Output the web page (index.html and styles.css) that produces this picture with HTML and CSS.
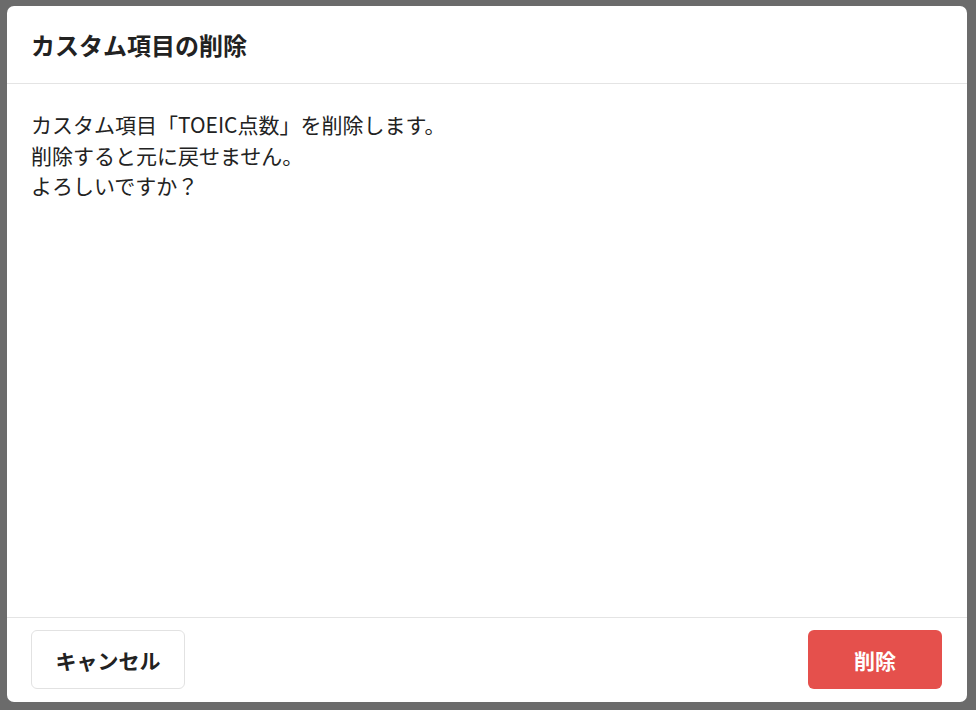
FILE: index.html
```html
<!DOCTYPE html>
<html lang="ja">

<head>
    <meta charset="UTF-8">
    <meta name="viewport" content="width=device-width, initial-scale=1.0">
    <title>カスタム項目の削除</title>
    <link rel="stylesheet" href="styles.css">
</head>

<body>
    <div class="backdrop">
        <div class="dialog">
            <div class="dialog-header">
                <h2>カスタム項目の削除</h2>
            </div>
            <div class="dialog-body">
                <p>カスタム項目「TOEIC点数」を削除します。<br>削除すると元に戻せません。<br>よろしいですか？</p>
            </div>
            <div class="dialog-footer">
                <button class="btn btn-cancel">キャンセル</button>
                <button class="btn btn-danger">削除</button>
            </div>
        </div>
    </div>
</body>

</html>
```

FILE: styles.css
```css
* {
    box-sizing: border-box;
}

body {
    margin: 0;
    font-family: "Noto Sans CJK JP", "Noto Sans", sans-serif;
    color: #222;
    background: #6b6b6b;
}

.backdrop {
    height: 710px;
    padding: 6px 9px 8px 7px;
    display: flex;
}

.dialog {
    flex: 1;
    background: white;
    border-radius: 7px;
    display: flex;
    flex-direction: column;
}

.dialog-header {
    height: 78px;
    padding: 0 24px;
    display: flex;
    align-items: center;
    border-bottom: 1px solid #e4e4e4;
}

.dialog-header h2 {
    margin: 0;
    font-size: 24px;
    font-weight: 700;
}

.dialog-body {
    flex: 1;
    padding: 25px 24px;
}

.dialog-body p {
    margin: 0;
    font-size: 21px;
    line-height: 30.5px;
}

.dialog-footer {
    display: flex;
    justify-content: space-between;
    padding: 12px 25px 13px 24px;
    border-top: 1px solid #e4e4e4;
}

.btn {
    height: 59px;
    font-family: inherit;
    font-size: 21px;
    font-weight: 700;
    border-radius: 6px;
    cursor: pointer;
}

.btn-cancel {
    width: 154px;
    background: white;
    color: #222;
    border: 1px solid #e2e2e2;
}

.btn-danger {
    width: 134px;
    background: #e5504c;
    color: white;
    border: none;
}
```
